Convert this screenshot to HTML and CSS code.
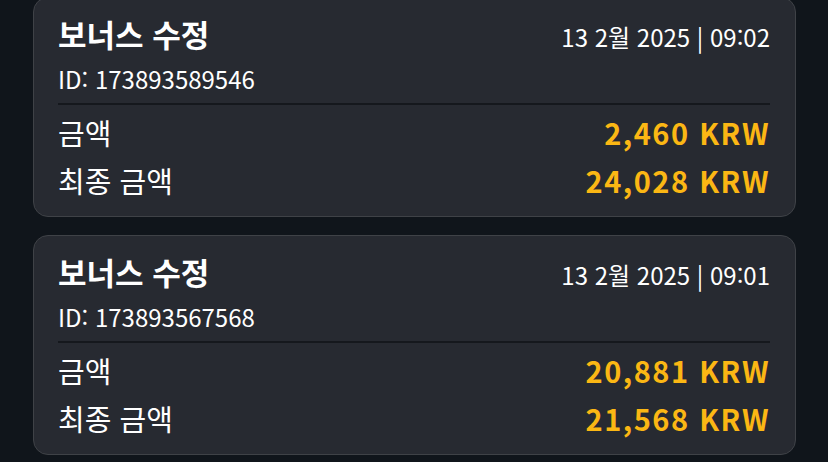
FILE: index.html
```html
<!DOCTYPE html>
<html lang="ko">
<head>
    <meta charset="UTF-8">
    <meta name="viewport" content="width=device-width, initial-scale=1.0">
    <title>보너스 내역</title>
    <link rel="stylesheet" href="styles.css">
</head>
<body>
    <div class="history-list">
        <div class="history-item">
            <div class="item-head">
                <div>
                    <div class="item-title">보너스 수정</div>
                    <div class="item-id">ID: 173893589546</div>
                </div>
                <div class="item-date">13 2월 2025 | 09:02</div>
            </div>
            <div class="item-rows">
                <div class="item-row">
                    <span class="row-label">금액</span>
                    <span class="row-value">2,460 KRW</span>
                </div>
                <div class="item-row">
                    <span class="row-label">최종 금액</span>
                    <span class="row-value">24,028 KRW</span>
                </div>
            </div>
        </div>

        <div class="history-item">
            <div class="item-head">
                <div>
                    <div class="item-title">보너스 수정</div>
                    <div class="item-id">ID: 173893567568</div>
                </div>
                <div class="item-date">13 2월 2025 | 09:01</div>
            </div>
            <div class="item-rows">
                <div class="item-row">
                    <span class="row-label">금액</span>
                    <span class="row-value">20,881 KRW</span>
                </div>
                <div class="item-row">
                    <span class="row-label">최종 금액</span>
                    <span class="row-value">21,568 KRW</span>
                </div>
            </div>
        </div>
    </div>
</body>
</html>
```

FILE: styles.css
```css
body {
    margin: 0;
    background-color: #10151b;
    color: #ffffff;
    font-family: "Noto Sans CJK KR", "Noto Sans", sans-serif;
}

.history-list {
    display: flex;
    flex-direction: column;
    gap: 18px;
    margin-top: -3px;
    padding: 0 32px 0 33px;
}

.history-item {
    height: 220px;
    box-sizing: border-box;
    background-color: #272a31;
    border: 1.5px solid #3f4247;
    border-radius: 15px;
    padding: 14px 25px 0 24px;
}

.item-head {
    display: flex;
    justify-content: space-between;
    align-items: flex-start;
    padding-bottom: 6px;
    border-bottom: 2px solid #15181d;
}

.item-title {
    font-size: 31px;
    font-weight: bold;
    line-height: 44px;
}

.item-id {
    font-size: 24px;
    line-height: 36px;
    margin-top: 5px;
}

.item-date {
    font-size: 24px;
    line-height: 34px;
    margin-top: 8px;
}

.item-rows {
    padding-top: 3px;
}

.item-row {
    display: flex;
    justify-content: space-between;
    align-items: center;
    height: 48px;
}

.row-label {
    font-size: 29px;
}

.row-value {
    font-size: 29px;
    font-weight: bold;
    letter-spacing: 1.5px;
    color: #fbb714;
}
```
